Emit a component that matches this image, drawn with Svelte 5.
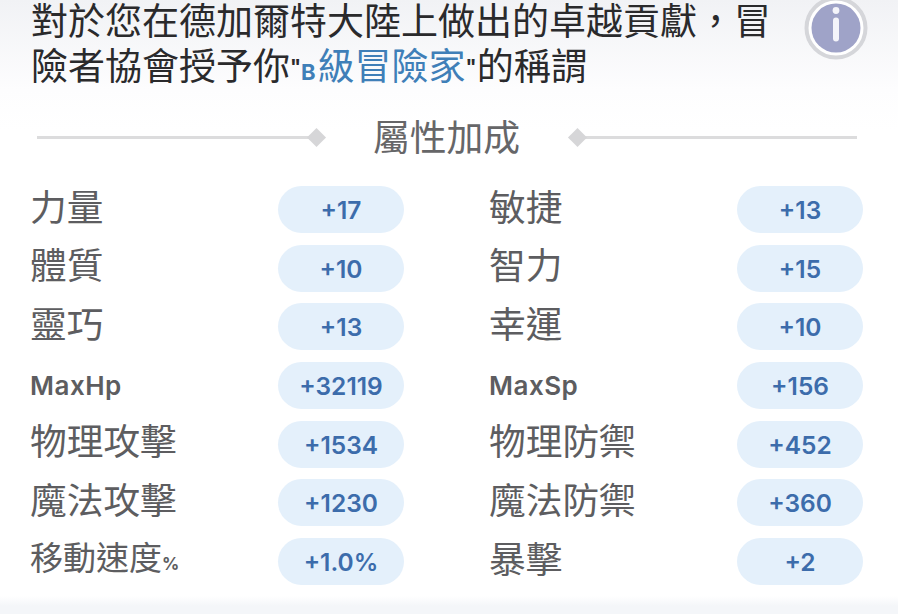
<script>
  const rows = [
    ['力量', '+17', '敏捷', '+13'],
    ['體質', '+10', '智力', '+15'],
    ['靈巧', '+13', '幸運', '+10'],
    ['MaxHp', '+32119', 'MaxSp', '+156'],
    ['物理攻擊', '+1534', '物理防禦', '+452'],
    ['魔法攻擊', '+1230', '魔法防禦', '+360'],
    ['移動速度%', '+1.0%', '暴擊', '+2']
  ];
  const stats = rows.flatMap((r) => [
    { label: r[0], value: r[1] },
    { label: r[2], value: r[3] }
  ]);
</script>

<div class="page">
  <header class="head">
    <p class="msg">對於您在德加爾特大陸上做出的卓越貢獻&#xFF0C;冒險者協會授予你<span class="q">"</span><span class="rank"><span class="b">B</span>級冒險家</span><span class="q">"</span>的稱謂</p>
    <svg class="info" viewBox="0 0 64 64" width="64" height="64" aria-hidden="true">
      <circle cx="32" cy="32" r="29.5" fill="#fff" stroke="#d5d6da" stroke-width="4" />
      <circle cx="32" cy="32" r="24.5" fill="#9fa3c8" />
      <circle cx="32" cy="14.5" r="3.4" fill="#f4f4fa" />
      <rect x="29" y="21.5" width="6" height="24" rx="3" fill="#f4f4fa" />
    </svg>
  </header>

  <div class="divider">
    <span class="line"></span><span class="dia"></span>
    <h2>屬性加成</h2>
    <span class="dia"></span><span class="line"></span>
  </div>

  <div class="grid">
    {#each stats as s}
      <div class="row">
        <span class="label" class:latin={s.label.startsWith('Max')} class:narrow={s.label.endsWith('%')}>
          {#if s.label.endsWith('%')}{s.label.slice(0, -1)}<small>%</small>{:else}{s.label}{/if}
        </span>
        <span class="pill">{s.value}</span>
      </div>
    {/each}
  </div>
</div>

<style>
  :global(body) {
    margin: 0;
    background: #fff;
  }
  .page {
    width: 898px;
    height: 614px;
    box-sizing: border-box;
    overflow: hidden;
    font-family: "Noto Sans CJK TC", "Noto Sans", sans-serif;
    background: linear-gradient(#f1f2f5 0, #fdfdfe 90px, #fff 130px, #fff 596px, #f4f6f9 606px, #f4f6f9 100%);
  }
  .head {
    display: flex;
    justify-content: space-between;
    align-items: flex-start;
    padding: 0 30px 0 31px;
    height: 114px;
  }
  .msg {
    margin: -3px 0 0;
    width: 745px;
    font-size: 37px;
    line-height: 45px;
    color: #2a2a2c;
  }
  .rank {
    color: #3f7fb8;
  }
  .b {
    font-family: "Inter", sans-serif;
    font-weight: 700;
    font-size: 22px;
    letter-spacing: 2px;
  }
  .q {
    font-family: "Inter", sans-serif;
    font-size: 20px;
    font-weight: 700;
    vertical-align: 6px;
    line-height: 0;
  }
  .info {
    margin-top: -4px;
    flex: none;
  }
  .divider {
    display: flex;
    align-items: center;
    padding: 0 41px 0 37px;
    height: 46px;
  }
  .line {
    flex: 1;
    height: 3px;
    background: #dcdcdd;
  }
  .dia {
    width: 15px;
    height: 15px;
    margin: 0 -3px;
    background: #d6d6d8;
    transform: rotate(45deg) scale(0.9);
    flex: none;
  }
  h2 {
    margin: -4px 53px 0 52px;
    font-size: 36.8px;
    font-weight: 400;
    line-height: 46px;
    color: #666668;
  }
  .grid {
    display: grid;
    grid-template-columns: 373px 373px;
    column-gap: 86px;
    row-gap: 11.7px;
    padding: 26px 0 0 31px;
  }
  .row {
    display: flex;
    justify-content: space-between;
    align-items: center;
    height: 47px;
  }
  .label {
    margin: -9px 0 0 -1px;
    font-size: 36.7px;
    line-height: 47px;
    color: #5d5d60;
  }
  .label.narrow {
    font-size: 33px;
    margin-top: -3px;
  }
  .label.latin {
    font-family: "Inter", sans-serif;
    font-size: 26px;
    font-weight: 600;
    letter-spacing: 0.5px;
    margin-top: 0;
  }
  small {
    font-family: "Inter", sans-serif;
    font-size: 17px;
    font-weight: 700;
  }
  .pill {
    width: 126px;
    height: 47px;
    border-radius: 24px;
    background: #e4f0fb;
    color: #3c6cab;
    font-family: "Inter", sans-serif;
    font-weight: 600;
    font-size: 24.5px;
    line-height: 49px;
    text-align: center;
  }
</style>
